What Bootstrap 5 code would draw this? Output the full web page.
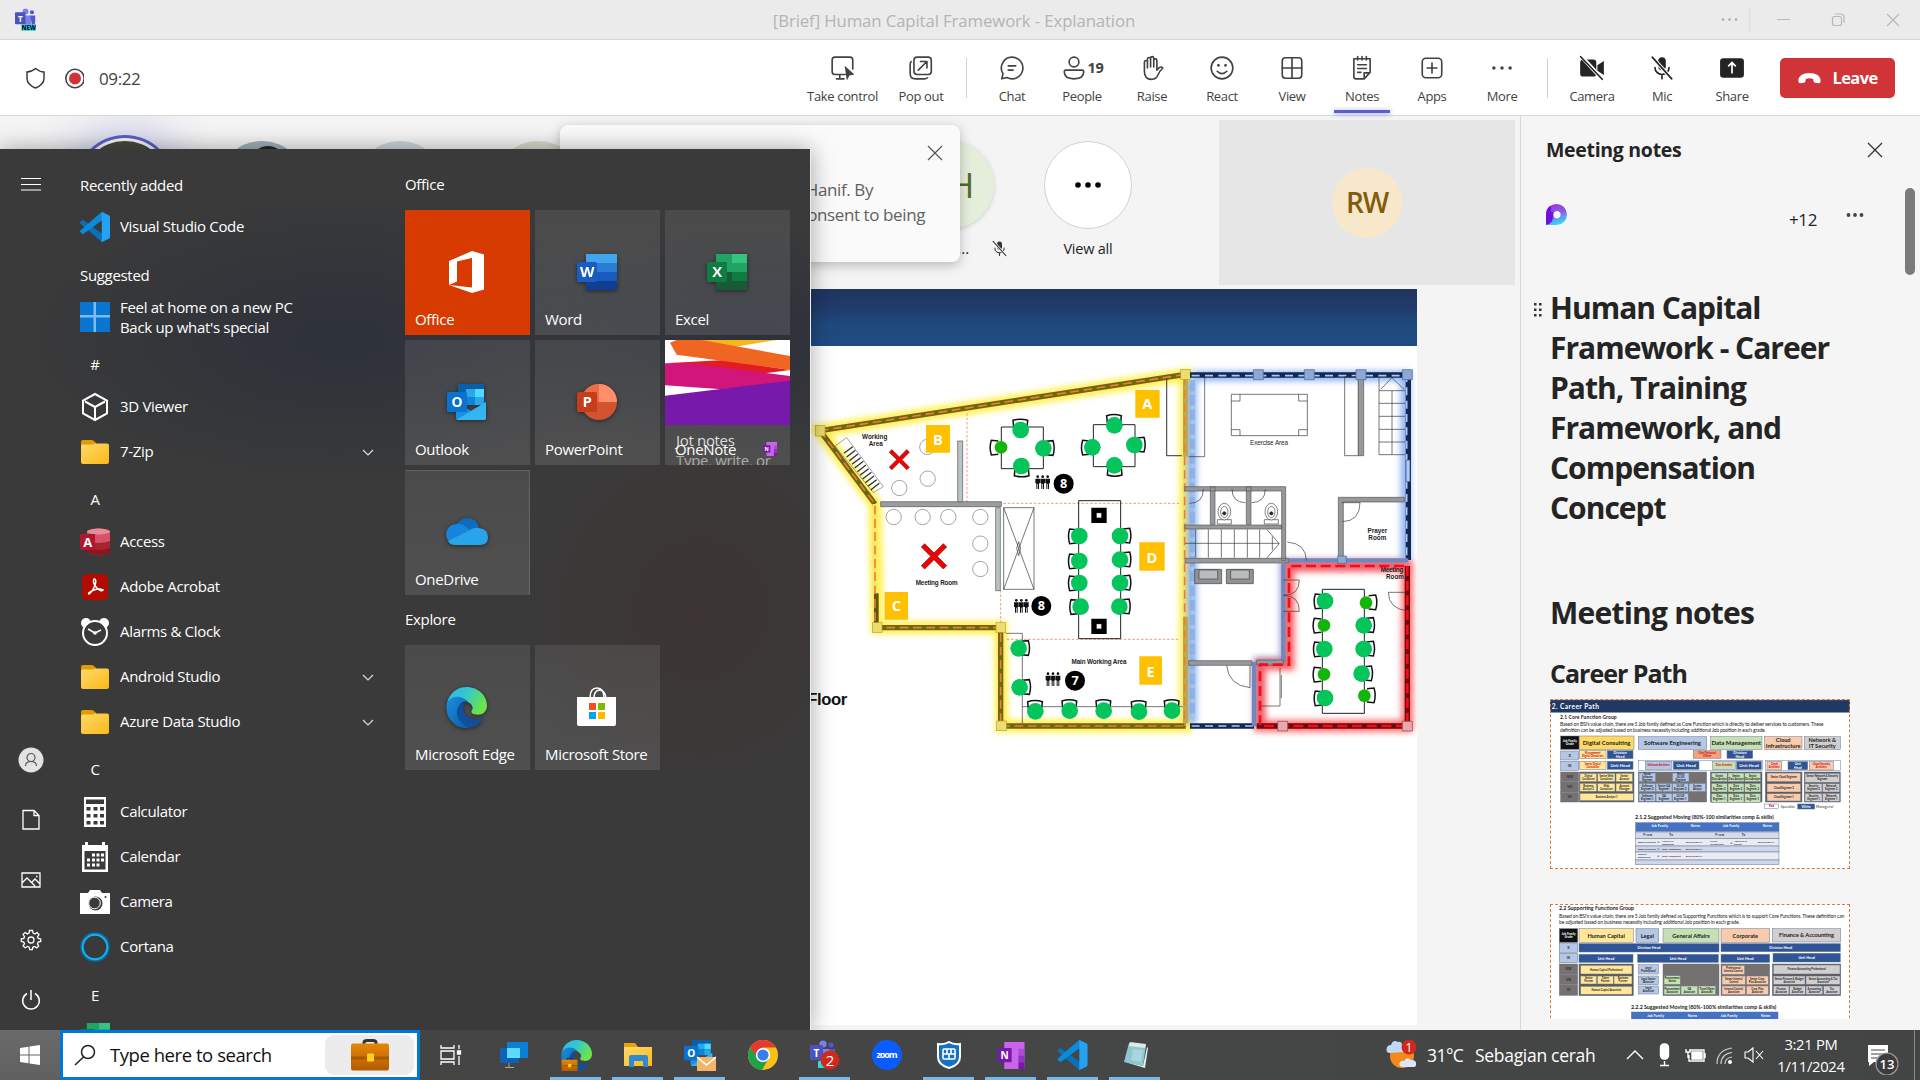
<!DOCTYPE html>
<html lang="en">
<head>
<meta charset="utf-8">
<title>Human Capital Framework - Explanation</title>
<link href="https://cdn.jsdelivr.net/npm/bootstrap@5.3.0/dist/css/bootstrap.min.css" rel="stylesheet">
<script src="https://cdn.jsdelivr.net/npm/bootstrap@5.3.0/dist/js/bootstrap.bundle.min.js"></script>
<style>
html,body{width:1920px;height:1080px;overflow:hidden}
body{font-family:"Open Sans","Noto Sans",sans-serif;font-size:15px;background:#f4f4f4;color:#242424;line-height:1.3}
svg{display:block;flex:none}
.titlebar{height:40px;background:#ebebeb;border-bottom:1px solid #d6d6d6;color:#b4b4b4}
.wintitle{font-size:16.8px;letter-spacing:-.12px;width:1910px;margin:2px -1720px 0 -37px;flex:none}
.toolbar-top{height:76px;background:#fff;border-bottom:1px solid #d9d9d9;position:relative;z-index:2}
.clock{font-size:17px;letter-spacing:-.4px;color:#424242;margin:3px 0 0 15px}
.tool{width:70px;height:75px;padding-top:15px;font-size:13px;letter-spacing:-.35px;color:#424242;position:relative;white-space:nowrap}
.tool svg{margin-bottom:7px}
.tool.current::after{content:"";position:absolute;left:7px;right:7px;bottom:2px;height:3px;background:#5b5fc7;box-shadow:0 1px 5px #8d90e6}
.vline{width:1px;height:40px;background:#d1d1d1}
.ln{fill:none;stroke:currentColor;stroke-width:1.5;stroke-linecap:round;stroke-linejoin:round}
.leave{width:115px;height:40px;border-radius:5px;background:#d13438;color:#fff;font-weight:700;font-size:16.5px;letter-spacing:-.6px;margin:1px 25px 0 13px}
.strip{height:173px;position:relative;background:#f4f4f4}
.person{width:137.6px;height:173px;padding-top:25px}
.face{width:88px;height:88px;border-radius:50%}
.speaking{box-shadow:0 0 0 3px #f4f4f4,0 0 0 6px #5b5fc7,0 0 45px 16px #cccde8}
.tile-rw{width:296px;height:165px;background:#e6e6e6;right:5px;top:4px}
.rw{width:70px;height:70px;border-radius:50%;background:#f8e8cb;color:#835b0c;font-size:28px;font-weight:600;letter-spacing:-1.2px}
.toast-card{left:560px;top:9px;width:400px;height:137px;border-radius:8px;background:#fafafa;box-shadow:0 3px 12px rgba(0,0,0,.25);z-index:3;padding:20px 17px 0 16px;color:#616161;font-size:17px;letter-spacing:-.4px}
.slide-page{margin-left:100px;width:1317px;height:736px;background:#fff}
.slide-band{height:57px;background:linear-gradient(#20355f,#203c6c 35%,#1f497c 60%,#204c84)}
.notes{width:400px;border-left:1px solid #d9d9d9;background:#f5f5f5;position:relative;overflow:hidden}
.notes h1{font-size:30px;line-height:40px;font-weight:700;margin:0;letter-spacing:-1px}
.notes h1.sub{letter-spacing:-.78px}
.notes h2{font-size:25px;line-height:34px;font-weight:700;margin:0;letter-spacing:-1px}
.thumb{width:300px;height:170px;outline:1px dashed #d9793a;outline-offset:-1px}
.scrollthumb{left:384px;top:72px;width:10px;height:87px;border-radius:5px;background:#7a7a7a}
.start{left:0;top:149px;width:811px;height:881px;z-index:10;color:#fff;border-right:1px solid #eee;box-shadow:0 0 22px rgba(0,0,0,.35);
 background:radial-gradient(ellipse 330px 150px at 340px 190px,#2d313a 0,rgba(45,49,58,0) 100%),radial-gradient(ellipse 250px 120px at 750px 190px,#2d313a 0,rgba(45,49,58,0) 100%),radial-gradient(ellipse 190px 200px at 700px 460px,#3c3533,rgba(60,53,51,0)),#3a3a3a}
.rail{width:62px}.rail>div{height:60px}
.apps{width:343px;padding:10px 0 0 18px;letter-spacing:-.32px;font-size:15px;overflow:hidden}
.app-row{height:45px;flex:none;white-space:nowrap;padding-top:1px}
.app-row>svg:first-child{margin-right:10px}
.app-head{height:45px;flex:none;padding-top:16px;line-height:20px}
.letter{width:30px;text-align:center;padding-top:15px}
.tiles{letter-spacing:-.32px}
.tilegrid{display:grid;grid-template-columns:repeat(3,125px);gap:5px}
.app-tile{height:125px;background:linear-gradient(rgba(255,255,255,.085),rgba(255,255,255,.11));position:relative;display:flex;flex-direction:column;overflow:hidden}
.app-tile .art{height:99px;padding:25px 2px 0 0;display:flex;align-items:center;justify-content:center}
.app-tile .cap{padding-left:10px;line-height:20px;white-space:nowrap}
.shade{filter:drop-shadow(0 1px 2px rgba(0,0,0,.5))}
.taskbar{height:50px;background:linear-gradient(90deg,#444342,#454646 60%,#434444);color:#fff;z-index:11;position:relative}
.winbtn{width:60px;background:linear-gradient(#6a6a6a,#606060)}
.search{width:360px;border:3px solid #0078d7;background:#fff;color:#111;font-size:18.5px;letter-spacing:-.45px}
.pill{width:89px;height:40px;border-radius:9px;background:#ececec}
.tb{width:62.1px;height:50px;position:relative}
.tb.open::after{content:"";position:absolute;left:5px;right:6px;bottom:0;height:3px;background:#76b9ed}
.tray{font-size:14px}
</style>
</head>
<body class="d-flex flex-column position-relative">

<svg width="0" height="0" class="position-absolute">
<defs>
 <linearGradient id="gf" x2="1" y2="1"><stop stop-color="#ffd96a"/><stop offset="1" stop-color="#fbb917"/></linearGradient>
 <linearGradient id="ge" x1="0" x2="1" y2=".4"><stop stop-color="#2fb7f0"/><stop offset=".5" stop-color="#32c8cf"/><stop offset="1" stop-color="#6be34b"/></linearGradient>
 <linearGradient id="gb" x2="1" y2="1"><stop stop-color="#1a8fe0"/><stop offset="1" stop-color="#0c59a4"/></linearGradient>
 <linearGradient id="gc" x2="0" y2="1"><stop stop-color="#e6860a"/><stop offset="1" stop-color="#b35c00"/></linearGradient>
 <linearGradient id="gl" x2=".3" y2="1"><stop stop-color="#9c2fd3"/><stop offset=".55" stop-color="#8b5be8"/><stop offset="1" stop-color="#35d5f2"/></linearGradient>
 <symbol id="vscode" viewBox="0 0 30 30"><path d="M0 10.200l2.200-2q.7-.5 1.400 0L22.500 22v7.500q-1 .3-2-.6L.3 11.500q-.6-.6-.3-1.300z" fill="#0a70b8"/><path d="M0 19.800l2.200 2q.7.500 1.400 0L22.500 8V.5q-1-.3-2 .6L.3 18.500q-.6.600-.3 1.300z" fill="#0a8bdc"/><path d="M21 .4q.7-.6 1.600-.2l6.200 3q1.200.6 1.200 1.800v20q0 1.200-1.200 1.800l-6.200 3q-.9.4-1.600-.2.800.3.800-1V1.400q0-1.300-.8-1z" fill="#25a3f3"/></symbol>
 <symbol id="folder" viewBox="0 0 28 24"><path d="M0 2q0-2 2-2h8q2 0 3 1l2 2v5H0z" fill="#e19b04"/><path d="M0 6.500q0-2 2-2h9q2 0 3-1h12q2 0 2 2V22q0 2-2 2H2q-2 0-2-2z" fill="url(#gf)"/></symbol>
 <symbol id="word" viewBox="0 0 40 36"><rect x="9" width="31" height="36" rx="1.500" fill="#2b7cd3"/><path d="M9 0h31v9H9z" fill="#41a5ee"/><path d="M9 18h31v9H9z" fill="#185abd"/><path d="M9 27h31v9H9z" fill="#103f91"/><rect y="8" width="20" height="20" rx="1.500" fill="#1b5dbf"/><text x="10" y="23.200" font-size="15" font-weight="700" fill="#fff" text-anchor="middle">W</text></symbol>
 <symbol id="excel" viewBox="0 0 40 36"><rect x="9" width="31" height="36" rx="1.500" fill="#185c37"/><path d="M9 0h16v9H9zM9 9h16v9H9z" fill="#21a366"/><path d="M25 0h15v9H25z" fill="#33c481"/><path d="M25 9h15v9H25z" fill="#21a366"/><path d="M25 18h15v9H25z" fill="#107c41"/><rect y="8" width="20" height="20" rx="1.500" fill="#107c41"/><text x="10" y="23.200" font-size="15" font-weight="700" fill="#fff" text-anchor="middle">X</text></symbol>
 <symbol id="outlook" viewBox="0 0 40 36"><path d="M11 0h26v20H11z" fill="#0a5ea8"/><path d="M19 5h9v8h-9z" fill="#28a8ea"/><path d="M28 5h9v8h-9z" fill="#50d9ff"/><path d="M19 13h9v8h-9z" fill="#0f84d4"/><path d="M28 13h9v8h-9z" fill="#28a8ea"/><path d="M9 18l15 9 15-9v16q0 2-2 2H11q-2 0-2-2z" fill="#1b8fe0"/><path d="M9 36l30-18v16q0 2-2 2z" fill="#35b4f2"/><rect y="8" width="20" height="20" rx="1.500" fill="#0a72cf"/><text x="10" y="23" font-size="14" font-weight="700" fill="#fff" text-anchor="middle">O</text></symbol>
 <symbol id="onenote" viewBox="0 0 40 40"><path d="M10 0h30v40H10z" fill="#ca64ea"/><path d="M31 10h9v10h-9z" fill="#ae4bd5"/><path d="M31 20h9v10h-9z" fill="#9332bf"/><path d="M31 30h9v10h-9z" fill="#7719aa"/><rect y="9" width="21" height="21" rx="1" fill="#7719aa"/><text x="10.500" y="25" font-size="15" font-weight="700" fill="#fff" text-anchor="middle">N</text></symbol>
 <symbol id="edge" viewBox="0 0 40 40"><path d="M1 16C3 6 11 0 20 0c12 0 20 9 20 18 0 6-4 9-9 9-4 0-7-1-6-4 2-2 1-6-3-8C15 9 5 10 1 16z" fill="url(#ge)"/><path d="M1 15C6 8 15 8 21 14q-6-1-9 6c-3 8 3 17 12 19.500Q12 42 5 33 -1 26 1 15z" fill="url(#gb)"/><path d="M21 15q-5 0-4 7c1 8 11 12 20 8q-5 8-12 9.500C15 38 9 30 11 22q3-8 10-7z" fill="#114e9c"/></symbol>
 <symbol id="case" viewBox="0 0 38 31"><path d="M13 5V3q0-2 3-2h6q3 0 3 2v2" fill="none" stroke="#333" stroke-width="3"/><rect y="4" width="38" height="27" rx="2" fill="url(#gc)"/><path d="M0 17h38v3H0z" fill="#8a4700" opacity=".55"/><rect x="16" y="14" width="7" height="8" rx="1" fill="#ffd21c"/></symbol>
 <symbol id="teams" viewBox="0 0 26 28"><circle cx="13" cy="4" r="3.600" fill="#7b83eb"/><circle cx="21" cy="5" r="2.600" fill="#5059c9"/><path d="M11 9h9v10q0 4-5 4t-5-4z" fill="#7b83eb"/><path d="M19 9h6v8q0 4-4 4z" fill="#5059c9"/><rect y="5" width="13" height="15" rx="1" fill="#4b53bc"/><text x="6.500" y="16.500" font-size="10" font-weight="700" fill="#fff" text-anchor="middle">T</text></symbol>
 <symbol id="micoff" viewBox="0 0 24 24"><rect x="8.500" y="2" width="7" height="12" rx="3.500" fill="currentColor"/><path d="M5.500 11.500a6.500 6.500 0 0 0 13 0M12 18v4" class="ln"/><path d="M3 2l18 20" stroke="#fff" stroke-width="3.400"/><path d="M3 2l18 20" class="ln"/></symbol>
</defs>
</svg>

<header class="titlebar d-flex align-items-center">
 <svg style="margin-left:15px" width="21" height="23" viewBox="0 0 26 28"><use href="#teams"/><rect x="8" y="20" width="18" height="8" fill="#2adbd8"/><text x="17" y="27" font-size="7.500" font-weight="800" text-anchor="middle" fill="#113">NEW</text></svg>
 <div class="wintitle text-center">[Brief] Human Capital Framework - Explanation</div>
 <svg class="ms-auto" width="205" height="24" viewBox="1715 8 205 24" fill="none" stroke="#b9b9b9" stroke-width="1.200"><g fill="#aaa" stroke="none"><circle cx="1723" cy="19.500" r="1.300"/><circle cx="1729.500" cy="19.500" r="1.300"/><circle cx="1736" cy="19.500" r="1.300"/></g><path d="M1749.500 8v24" stroke="#ddd"/><path d="M1777 19.500h13M1887 14l12 12M1899 14l-12 12"/><rect x="1832.500" y="16.500" width="9" height="9" rx="2"/><path d="M1835 14h6q3 0 3 3v6"/></svg>
</header>

<div class="toolbar-top d-flex align-items-center">
 <svg width="62" height="30" viewBox="22 62 62 30" style="margin-left:22px"><path d="M35.500 67.500q4.500 3.500 8.500 3.500V77.500q0 6-8.500 9.500Q27 83.500 27 77.500v-6.500q4.500 0 8.500-3.500z" fill="none" stroke="#333" stroke-width="1.400"/><circle cx="75" cy="77.500" r="9.200" fill="#fff" stroke="#444" stroke-width="1.600"/><circle cx="75" cy="77.500" r="6" fill="#d13438"/></svg>
 <span class="clock">09:22</span>
 <div class="ms-auto d-flex align-items-center">
  <div class="tool d-flex flex-column align-items-center" style="width:89px"><svg width="26" height="26" viewBox="0 0 24 24"><path d="M14 18H4.500Q2 18 2 15.500v-11Q2 2 4.500 2h14Q21 2 21 4.500V13M9 18v4M6 22h7" class="ln"/><path d="M13.500 10l9 8-4.500 1-2.500 4.500z" fill="currentColor"/></svg>Take control</div>
  <div class="tool d-flex flex-column align-items-center" style="width:68px"><svg width="26" height="26" viewBox="0 0 24 24"><rect x="5.500" y="2" width="16" height="16" rx="3" class="ln"/><path d="M3 6q-1 1-1 3v8q0 5 5 5h8q2 0 3-1M9.500 14L17 6.500M11.500 6H17.500v6" class="ln"/></svg>Pop out</div>
  <div class="d-flex justify-content-center" style="width:22px"><div class="vline"></div></div>
  <div class="tool d-flex flex-column align-items-center"><svg width="26" height="26" viewBox="0 0 24 24"><path d="M12 2a10 10 0 1 1-4.700 18.800L2.500 22l1.200-4.700A10 10 0 0 1 12 2zM8.500 10h7M8.500 14h4.500" class="ln"/></svg>Chat</div>
  <div class="tool d-flex flex-column align-items-center"><div class="d-flex"><svg width="26" height="26" viewBox="0 0 24 24"><circle cx="12" cy="6.500" r="4.500" class="ln"/><path d="M4.500 14h15q1.500 0 1.500 1.500 0 6.500-9 6.500t-9-6.500Q3 14 4.500 14z" class="ln"/></svg><b style="font-size:14.500px;line-height:25px;margin-left:1px;font-weight:700">19</b></div>People</div>
  <div class="tool d-flex flex-column align-items-center"><svg width="26" height="26" viewBox="0 0 24 24"><path d="M5 13V6.500a1.400 1.400 0 0 1 2.800 0V12M7.800 11V3.700a1.400 1.400 0 0 1 2.900 0V11M10.700 11V3a1.400 1.400 0 0 1 2.900 0v8M13.600 11V5a1.400 1.400 0 0 1 2.900 0v9l2-2.200q2-1.500 3.500.2-3.500 3.300-4.500 6.500-1.500 4-6 4Q5 22.500 5 15v-3" class="ln"/></svg>Raise</div>
  <div class="tool d-flex flex-column align-items-center"><svg width="26" height="26" viewBox="0 0 24 24"><circle cx="12" cy="12" r="10" class="ln"/><path d="M7.500 15q4.500 4.500 9 0" class="ln"/><circle cx="8.700" cy="9.500" r="1.300" fill="currentColor"/><circle cx="15.300" cy="9.500" r="1.300" fill="currentColor"/></svg>React</div>
  <div class="tool d-flex flex-column align-items-center"><svg width="26" height="26" viewBox="0 0 24 24"><rect x="3" y="2.500" width="18" height="19" rx="3" class="ln"/><path d="M12 2.500v19M3 12h18" class="ln"/></svg>View</div>
  <div class="tool current d-flex flex-column align-items-center"><svg width="26" height="26" viewBox="0 0 24 24"><path d="M4.500 3.500h15V16L14 22H6.500q-2 0-2-2zM19 16.500h-5V22M8 1.500v3M12 1.500v3M16 1.500v3M8 9h8M8 12.500h8M8 16h3" class="ln"/></svg>Notes</div>
  <div class="tool d-flex flex-column align-items-center"><svg width="26" height="26" viewBox="0 0 24 24"><rect x="3" y="3" width="18" height="18" rx="3.500" class="ln"/><path d="M12 7.500v9M7.500 12h9" class="ln"/></svg>Apps</div>
  <div class="tool d-flex flex-column align-items-center"><svg width="26" height="26" viewBox="0 0 24 24" fill="currentColor"><circle cx="4.500" cy="12" r="1.600"/><circle cx="12" cy="12" r="1.600"/><circle cx="19.500" cy="12" r="1.600"/></svg>More</div>
  <div class="d-flex justify-content-center" style="width:20px"><div class="vline"></div></div>
  <div class="tool d-flex flex-column align-items-center"><svg width="28" height="26" viewBox="0 0 26 24" color="#242424"><rect x="2" y="4" width="15" height="16" rx="3" fill="currentColor"/><path d="M18 9.500l6-4v13l-6-4z" fill="currentColor"/><path d="M3 1l20 22" stroke="#fff" stroke-width="3.600"/><path d="M2.500 1.500l20 21" class="ln"/></svg>Camera</div>
  <div class="tool d-flex flex-column align-items-center"><svg width="26" height="26" color="#242424"><use href="#micoff"/></svg>Mic</div>
  <div class="tool d-flex flex-column align-items-center"><svg width="26" height="26" viewBox="0 0 24 24"><rect x="1" y="3" width="22" height="18" rx="3" fill="#242424"/><path d="M12 17V7.500M8.500 10.500L12 7l3.500 3.500" fill="none" stroke="#fff" stroke-width="1.600"/></svg>Share</div>
  <div class="leave d-flex align-items-center justify-content-center" style="gap:10px"><svg width="25" height="13" viewBox="0 0 26 14"><path d="M13 1C6 1 1 4 1 9.500q0 3 2.500 2.700l3.500-.6q1.500-.4 1.700-2l.3-2q4-1.500 8 0l.3 2q.2 1.600 1.700 2l3.500.6q2.500.3 2.500-2.700C25 4 20 1 13 1z" fill="#fff"/></svg>Leave</div>
 </div>
</div>

<main class="d-flex" style="height:914px">
 <section style="width:1520px">
  <div class="strip d-flex" style="padding-left:56px">
   <div class="person d-flex flex-column align-items-center"><div class="face speaking" style="background:#454840"></div></div>
   <div class="person d-flex flex-column align-items-center"><svg class="face" width="88" height="88"><rect width="88" height="88" fill="#9db0b7"/><circle cx="50" cy="22" r="17" fill="#22272a"/></svg></div>
   <div class="person d-flex flex-column align-items-center"><div class="face" style="background:#c9d3da"></div></div>
   <div class="person d-flex flex-column align-items-center"><div class="face" style="background:#d3dbcb"></div></div>
   <div class="person"></div><div class="person"></div>
   <div class="person d-flex flex-column align-items-center"><div class="face d-flex align-items-center justify-content-center" style="background:#e5eddb;box-shadow:0 1px 4px #ccc;color:#4c6b2c;font-size:35px;font-weight:500">AH</div><div class="d-flex align-items-center w-100 justify-content-end" style="padding:10px 11px 0 0;gap:22px">...<svg width="17" height="17" color="#333"><use href="#micoff"/></svg></div></div>
   <div class="person d-flex flex-column align-items-center"><div class="face d-flex align-items-center justify-content-center bg-white" style="border:1px solid #d1d1d1"><svg width="28" height="6"><circle cx="4" cy="3" r="2.800"/><circle cx="14" cy="3" r="2.800"/><circle cx="24" cy="3" r="2.800"/></svg></div><span style="font-size:14.500px;letter-spacing:-.22px;margin-top:11px">View all</span></div>
   <div class="toast-card position-absolute"><div class="d-flex justify-content-between"><b style="font-weight:600;color:#242424">Recording has started</b><svg width="16" height="16" viewBox="0 0 16 16" stroke="#555" stroke-width="1.200"><path d="M1 1l14 14M15 1L1 15"/></svg></div>
    <div style="padding:10px 70px 0 0;line-height:25px;text-align:right;white-space:nowrap">Hanif. By</div><div style="padding-right:18px;line-height:25px;text-align:right">you consent to being</div></div>
   <div class="tile-rw position-absolute d-flex align-items-center justify-content-center"><div class="rw d-flex align-items-center justify-content-center">RW</div></div>
  </div>
  <div class="slide-page">
   <div class="slide-band"></div>
   <div class="d-flex justify-content-end">
   <svg id="plan" width="617" height="679" viewBox="0 -42 1851 2037" font-family="Liberation Sans, sans-serif">
    <defs>
     <filter id="soft" x="-10%" y="-10%" width="120%" height="120%"><feGaussianBlur stdDeviation="9"/></filter>
     <g id="chair"><path d="M-8-19L-29-21Q-36 1-29 23L-8 21" fill="none" stroke="#111" stroke-width="4.500"/></g>
     <g id="crowd" fill="#111"><circle cx="-15" cy="-17" r="4"/><circle cy="-17" r="4"/><circle cx="15" cy="-17" r="4"/><path d="M-22-11h14v14h-3v17h-3V5h-2v15h-3V3h-3zM-7-11H7V3H4v17H1V5h-2v15h-3V3h-3zM8-11h14V3h-3v17h-3V5h-2v15h-3V3H8z"/></g>
     <g id="cross"><path d="M-38-28l10-10L0-10l28-28 10 10L10 0l28 28-10 10L0 10l-28 28-10-10L-10 0z" fill="#f40000" stroke="#611" stroke-width="2"/></g>
    </defs>
    <path d="M60 212L1157 45V1098H605L602 803H232L225 432z" fill="none" stroke="#fff04a" stroke-width="38" filter="url(#soft)"/>
    <path d="M1175 60V1090M1180 48H1817V600" fill="none" stroke="#8db4f5" stroke-width="30" filter="url(#soft)"/>
    <path d="M1810 612H1452V905H1375V1098" fill="none" stroke="#9cbcf5" stroke-width="26" filter="url(#soft)"/>
    <path d="M1467 618H1822V1098H1380V914H1467z" fill="none" stroke="#ff4545" stroke-width="34" filter="url(#soft)" opacity=".8"/>
    <g fill="none">
     <path d="M1157 43L60 212 225 432M232 803H602V1098H1157" stroke="#6f6710" stroke-width="16"/>
     <path d="M225 432V803" stroke="#f7e868" stroke-width="15"/><path d="M229 700V803" stroke="#5e5710" stroke-width="14"/>
     <path d="M1157 60V290M1157 770V1090" stroke="#b5ac55" stroke-width="16"/>
     <path d="M60 212L1157 43M60 212L225 432V803H602V1098H1157M1154 50V1098" stroke="#f37a3b" stroke-width="5" stroke-dasharray="26 14"/>
     <path d="M501 160V430M610 430H1140M602 690V800M620 838H1140" stroke="#f08a68" stroke-width="2.500" stroke-dasharray="8 5"/>
    </g>
    <g fill="#eedc6c" stroke="#b3a33b" stroke-width="2"><rect x="46" y="196" width="29" height="32"/><rect x="1142" y="28" width="29" height="30"/><rect x="217" y="788" width="29" height="29"/><rect x="588" y="788" width="29" height="29"/><rect x="590" y="1083" width="29" height="29"/></g>
    <g fill="#999d9f" stroke="#555" stroke-width="2"><path d="M242 425H604V440H242z"/><path d="M473 243h15V425h-15zM587 443h14V692h-14z" fill="#b9c2c4"/></g>
    <g fill="none" stroke="#333" stroke-width="2">
     <path d="M1100 55V287H1145M611 443H702V688H611zM611 443L702 688M702 443L611 688M656 545l-6 20 6 22 6-22zM617 820H667V1090M667 1040H1148"/>
     <path d="M836 422H962V836H836zM604 201H730V326H604zM880 194H1005V320H880z" stroke="#222" stroke-width="3"/>
     <path d="M105 258L140 233 250 380 220 398z" stroke="#777"/>
     <path d="M158 260l-26 20M166 271l-26 20M174 282l-26 20M182 293l-26 20M190 304l-26 20M198 315l-26 20M206 326l-26 20M214 337l-26 20M222 348l-26 20M230 359l-26 20M238 370l-26 20" stroke-width="4"/>
     <g stroke="#777"><circle cx="382" cy="261" r="23"/><circle cx="383" cy="356" r="23"/><circle cx="298" cy="384" r="23"/><circle cx="281" cy="471" r="23"/><circle cx="368" cy="471" r="23"/><circle cx="445" cy="471" r="23"/><circle cx="541" cy="471" r="23"/><circle cx="541" cy="551" r="23"/><circle cx="541" cy="627" r="23"/></g>
    </g>
    <g id="seats"></g>
    <path d="M874 443h46v46h-46zM874 776h46v46h-46z" fill="#000"/><path d="M890 459h14v14h-14zM890 792h14v14h-14z" fill="#fff" stroke="#555"/>
    <use href="#cross" transform="translate(298 299) scale(.8)"/><use href="#cross" transform="translate(402 589)"/>
    <use href="#crowd" x="728" y="367"/><use href="#crowd" x="664" y="738"/><use href="#crowd" x="759" y="958"/>
    <g font-weight="700" font-family="Open Sans, sans-serif" font-size="38" text-anchor="middle" fill="#fff"><g fill="#000"><circle cx="791" cy="371" r="30"/><circle cx="724" cy="738" r="30"/><circle cx="825" cy="962" r="30"/></g><text x="791" y="384">8</text><text x="724" y="751">8</text><text x="825" y="975">7</text>
     <path d="M1006 90h73v83h-73zM378 195h72v83h-72zM254 696h70v83h-70zM1018 547h76v85h-76zM1018 889h68v85h-68z" fill="#ffc000"/>
     <g font-size="44"><text x="1042" y="147">A</text><text x="414" y="254">B</text><text x="289" y="754">C</text><text x="1056" y="608">D</text><text x="1052" y="950">E</text></g></g>
    <g font-size="19" font-weight="700" text-anchor="middle" fill="#222"><text x="224" y="236">Working</text><text x="227" y="257">Area</text><text x="410" y="674" textLength="126">Meeting Room</text><text x="897" y="911" textLength="165">Main Working Area</text><text x="1732" y="519">Prayer</text><text x="1732" y="540">Room</text><text x="1776" y="636" textLength="68">Meeting</text><text x="1785" y="657">Room</text><text x="1407" y="254" textLength="114" font-weight="400">Exercise Area</text></g>
    <text x="22" y="1034" font-size="50" font-weight="700" textLength="120" fill="#111">Floor</text>
    <g transform="translate(1080 0)" fill="none" stroke="#333" stroke-width="2">
     <path d="M90 45H745V600M90 1098H282" stroke="#14284f" stroke-width="16"/>
     <path d="M95 47H740V600M95 1098H282M97 60V1070" stroke="#a9c8ff" stroke-width="5" stroke-dasharray="24 16"/>
     <path d="M97 60V1070" stroke="#7fa3e8" stroke-width="16" stroke-dasharray="32 12" opacity=".55"/>
     <path d="M385 601H745M370 612V905M282 905V1098" stroke="#7089bd" stroke-width="13"/>
     <path d="M738 300h12v65h-12z" fill="#a9c8ff" stroke="#456"/>
     <path d="M20 55V287H66M86 290H134V50M554 50H595V287H554zM214 103H442V227H214zM214 123h26v-20M416 103v20h26M214 209h26v18M416 227v-18h26M657 55V284H735M696 92V284M657 92H735M657 130H735M657 169H735M657 208H735M657 246H735M662 88l34-35 36 35"/>
     <path d="M75 550H357M107 508v85M145 508v85M184 508v85M223 508v85M262 508v85M299 508v85M337 530v40M320 508l38 43-38 43"/>
     <g fill="#96999c" stroke="#555"><path d="M595 50h16V287h-16zM75 380H377V602H365V393H75zM151 380h14V493H151zM259 380h14V493H259zM75 495H365v12H75zM75 595H385v14H75zM535 412H733v14H550V590H535zM86 902H275v14H86zM290 900H370v15H290z"/></g>
     <path d="M130 387Q130 430 88 430M216 387q0 40 40 41M316 387q0 40-41 41M545 428h55q0 55-52 57M382 546q57 5 57 56M200 916q5 60 70 67V916M370 660h48q0 46-48 46q48 0 48 48H370M748 697H685q0 50 60 56M300 1038h60V923M364 945v70"/>
     <g fill="#fff" stroke="#444"><path d="M172 492v-13h42v13zM313 492v-13h42v13z"/><ellipse cx="193" cy="455" rx="19" ry="25"/><ellipse cx="334" cy="455" rx="19" ry="25"/><ellipse cx="193" cy="456" rx="11" ry="17"/><ellipse cx="334" cy="456" rx="11" ry="17"/></g>
     <g fill="#222"><circle cx="193" cy="460" r="5"/><circle cx="334" cy="460" r="5"/></g>
     <g fill="#8f9293" stroke="#444"><path d="M104 628h81v43h-81zM199 628h81v43h-81z"/><path d="M117 630h56v27h-56zM212 630h56v27h-56z" fill="#b9bbbc"/></g>
     <path d="M487 688H613V1060H487z" stroke="#222" stroke-width="3"/>
     <path d="M742 618V1098H290" stroke="#6c0a12" stroke-width="16"/>
     <path d="M742 618V1098H300V914H387V618z" stroke="#fa0a18" stroke-width="8" stroke-dasharray="30 14"/>
     <g fill="#8ea8d4" stroke="#4d6795"><path d="M280 29h30v30h-30zM433 29h30v30h-30zM588 29h30v30h-30zM727 29h30v30h-30zM533 588h26v22h-26z"/></g>
     <g fill="#e8a9ae" stroke="#844"><path d="M353 1084h30v29h-30zM727 1084h30v29h-30z"/></g>
    </g>
    <g id="seats2"></g>
   </svg></div>
  </div>
 </section>

 <aside class="notes">
  <div class="d-flex justify-content-between align-items-center" style="padding:22px 37px 0 25px;height:46px"><span style="font-size:19.500px;font-weight:700;letter-spacing:-.3px">Meeting notes</span><svg width="16" height="16" stroke="#333" stroke-width="1.300"><path d="M1 1l14 14M15 1L1 15"/></svg></div>
  <div class="d-flex align-items-start" style="padding:42px 56px 0 25px;height:125px"><svg width="22" height="22" viewBox="0 0 22 22"><path d="M0 21V10.500A10.500 10.500 0 1 1 10.500 21zM11 7a3.700 3.700 0 1 0 .01 0z" fill="url(#gl)" fill-rule="evenodd"/><path d="M0 21V10.500Q0 4 5 1.500V8q3-1 2 4 0 8-7 9z" fill="#7010e0"/></svg><span class="ms-auto" style="font-size:17px;letter-spacing:-.4px;margin-top:5px;margin-right:29px">+12</span><svg width="18" height="6" style="margin-top:8px" fill="#444"><circle cx="2.500" cy="3" r="1.900"/><circle cx="9" cy="3" r="1.900"/><circle cx="15.500" cy="3" r="1.900"/></svg></div>
  <div class="d-flex"><svg width="10" height="16" style="margin:16px 7px 0 12px" fill="#333"><path d="M1 0h2.500v2.500H1zM6 0h2.500v2.500H6zM1 5.500h2.500V8H1zM6 5.500h2.500V8H6zM1 11h2.500v2.500H1zM6 11h2.500v2.500H6z"/></svg><h1 style="padding-top:1px">Human Capital<br>Framework - Career<br>Path, Training<br>Framework, and<br>Compensation<br>Concept</h1></div>
  <h1 class="sub" style="margin:65px 0 0 29px">Meeting notes</h1>
  <h2 style="margin:23px 0 9px 29px">Career Path</h2>
  <svg id="chart1" class="thumb" style="margin-left:29px" viewBox="60 27 900 510"></svg>
  <div style="margin:35px 0 0 29px;height:115px;overflow:hidden"><svg id="chart2" class="thumb" viewBox="60 642 900 510"></svg></div>
  <div class="scrollthumb position-absolute"></div>
 </aside>
</main>

<nav class="start position-absolute d-flex">
 <div class="rail d-flex flex-column align-items-center">
  <svg width="20" height="14" style="margin-top:28px" stroke="#fff" stroke-width="1.200"><path d="M0 1.500h20M0 7.500h20M0 13h20"/></svg>
  <div class="mt-auto d-flex align-items-center"><svg width="26" height="26"><circle cx="13" cy="13" r="12.500" fill="#e3e3e3"/><circle cx="13" cy="10.500" r="4" fill="none" stroke="#555" stroke-width="1.200"/><path d="M7.500 19q0-4.500 5.500-4.500t5.500 4.500" fill="none" stroke="#555" stroke-width="1.200"/></svg></div>
  <div class="d-flex align-items-center"><svg width="18" height="22" fill="none" stroke="#fff" stroke-width="1.300"><path d="M1 1.500h11l5 5v13.500H1zM12 1.500v5h5"/></svg></div>
  <div class="d-flex align-items-center"><svg width="20" height="16" fill="none" stroke="#fff" stroke-width="1.300"><path d="M1 1h18v14H1zM1 11l5-5 8 8M11 10l3-3 5 5M15 4.500h1.500"/></svg></div>
  <div class="d-flex align-items-center"><svg width="22" height="22" viewBox="-11 -11 22 22" fill="none" stroke="#fff" stroke-width="1.300"><circle r="3"/><path d="M-1.500-9.500h3l.6 2.600 1.800.8L6.200-7.500 8-5.500 6.500-3.200l.8 1.700 2.400.5v2.500l-2.500.6-.8 1.800L7.700 6 5.800 7.900 3.600 6.500l-1.800.8-.5 2.400h-2.500l-.6-2.500L-3.600 6.500l-2.300 1.300L-7.900 6l1.400-2.300-.8-1.700-2.400-.6v-2.500l2.500-.5.7-1.700-1.400-2.300 2-1.900 2.200 1.400 1.700-.8z"/></svg></div>
  <div class="d-flex align-items-center"><svg width="20" height="22" fill="none" stroke="#fff" stroke-width="1.500"><path d="M6 4.500a8.300 8.300 0 1 0 8 0M10 1v10"/></svg></div>
 </div>
 <div class="apps d-flex flex-column">
  <div class="app-head">Recently added</div>
  <div class="app-row d-flex align-items-center"><svg width="30" height="30"><use href="#vscode"/></svg>Visual Studio Code</div>
  <div class="app-head">Suggested</div>
  <div class="app-row d-flex align-items-center" style="line-height:20px;padding-top:0"><svg width="30" height="30"><path d="M0 0h30v30H0z" fill="#0a74d1"/><path d="M13.500 0h2.500v30h-2.500zM0 13h30v2.500H0z" fill="#79bdf2"/></svg><span>Feel at home on a new PC<br>Back up what's special</span></div>
  <div class="app-head letter">#</div>
  <div class="app-row d-flex align-items-center"><svg width="30" height="30" fill="none" stroke="#fff" stroke-width="2"><path d="M15 2l12 6.500v13L15 28 3 21.500v-13zM5 9.500l10 5.500 10-5.500M15 15v12"/></svg>3D Viewer</div>
  <div class="app-row d-flex align-items-center"><svg width="30" height="24"><use href="#folder"/></svg>7-Zip<svg class="ms-auto" width="12" height="7" style="margin-right:31px" fill="none" stroke="#ddd" stroke-width="1.200"><path d="M1 1l5 5 5-5"/></svg></div>
  <div class="app-head letter">A</div>
  <div class="app-row d-flex align-items-center"><svg width="30" height="28"><path d="M7 3q11-5 23 0v22q-11 5-23 0z" fill="#a4262c"/><path d="M7 3q11-5 23 0v10q-11 4-23 0z" fill="#d6536b"/><ellipse cx="18.500" cy="3.500" rx="11.500" ry="3" fill="#e88b9b"/><path d="M7 20q11 4 23 0v5q-11 4-23 0z" fill="#8a1523"/><path d="M0 6h15v16H0z" fill="#b0172e"/><text x="7.500" y="18.500" font-size="13" font-weight="700" fill="#fff" text-anchor="middle">A</text></svg>Access</div>
  <div class="app-row d-flex align-items-center"><svg width="30" height="28"><rect x="2" y="1" width="26" height="26" rx="5" fill="#b30b00"/><path d="M14 6q3 0 1 6-2 6-6 9-2-1 5-4 5-2 9 0-2 2-6-2-5-5-3-9z" fill="none" stroke="#fff" stroke-width="1.500"/></svg>Adobe Acrobat</div>
  <div class="app-row d-flex align-items-center"><svg width="30" height="30"><circle cx="6" cy="6" r="5" fill="#fff"/><circle cx="24" cy="6" r="5" fill="#fff"/><circle cx="15" cy="16" r="12" fill="#3a3a3a" stroke="#fff" stroke-width="2"/><path d="M8 12l7 4 6-3" fill="none" stroke="#fff" stroke-width="1.600"/><circle cx="15" cy="16" r="1.800" fill="#fff"/></svg>Alarms &amp; Clock</div>
  <div class="app-row d-flex align-items-center"><svg width="30" height="24"><use href="#folder"/></svg>Android Studio<svg class="ms-auto" width="12" height="7" style="margin-right:31px" fill="none" stroke="#ddd" stroke-width="1.200"><path d="M1 1l5 5 5-5"/></svg></div>
  <div class="app-row d-flex align-items-center"><svg width="30" height="24"><use href="#folder"/></svg>Azure Data Studio<svg class="ms-auto" width="12" height="7" style="margin-right:31px" fill="none" stroke="#ddd" stroke-width="1.200"><path d="M1 1l5 5 5-5"/></svg></div>
  <div class="app-head letter">C</div>
  <div class="app-row d-flex align-items-center"><svg width="30" height="30"><path d="M4 0h22v30H4z" fill="#fff"/><path d="M6 2.500h18v4.500H6zM6.500 10h4v3.500h-4zM13.500 10h4v3.500h-4zM20 10h4v3.500h-4zM6.500 17h4v3.500h-4zM13.500 17h4v3.500h-4zM20 17h4v3.500h-4zM6.500 24h4v3.500h-4zM13.500 24h4v3.500h-4zM20 24h4v3.500h-4z" fill="#3a3a3a"/></svg>Calculator</div>
  <div class="app-row d-flex align-items-center"><svg width="30" height="30"><path d="M2 3h3V0h3v3h14V0h3v3h3v27H2z" fill="#fff"/><path d="M4.500 9h21v18.500h-21z" fill="#3a3a3a"/><path d="M12 11.500h3v3h-3zM16.500 11.500h3v3h-3zM21 11.500h3v3h-3zM7 16.500h3v3H7zM12 16.500h3v3h-3zM16.500 16.500h3v3h-3zM21 16.500h3v3h-3zM7 21.500h3v3H7zM12 21.500h3v3h-3zM16.500 21.500h3v3h-3z" fill="#fff"/></svg>Calendar</div>
  <div class="app-row d-flex align-items-center"><svg width="30" height="24"><path d="M0 3h8l2-3h10l2 3h8v21H0z" fill="#fff"/><circle cx="15.500" cy="13.500" r="7" fill="#3a3a3a"/><circle cx="14.500" cy="13" r="5.800" fill="#3a3a3a" stroke="#fff"/><circle cx="25.500" cy="7" r="1" fill="#3a3a3a"/></svg>Camera</div>
  <div class="app-row d-flex align-items-center"><svg width="30" height="30"><circle cx="15" cy="15" r="13" fill="none" stroke="#0c6d9e" stroke-width="3.500"/><circle cx="15" cy="15" r="12.300" fill="none" stroke="#12b2f5" stroke-width="1.900"/></svg>Cortana</div>
  <div class="app-head letter" style="padding-top:16px">E</div>
  <div style="margin-top:9px;flex:none"><svg width="30" height="27"><use href="#excel"/></svg></div>
 </div>
 <div class="tiles">
  <div style="height:61px;padding-top:25px;line-height:20px">Office</div>
  <div class="tilegrid">
   <div class="app-tile" style="background:#d83b01"><div class="art"><svg width="36" height="42" viewBox="0 0 36 42"><path d="M0 10L23 0l12 3.500v35L23 42 0 34l23 2.500V7L8 10.500v20L0 34z" fill="#fff"/></svg></div><div class="cap">Office</div></div>
   <div class="app-tile"><div class="art"><svg class="shade" width="40" height="36"><use href="#word"/></svg></div><div class="cap">Word</div></div>
   <div class="app-tile"><div class="art"><svg class="shade" width="40" height="36"><use href="#excel"/></svg></div><div class="cap">Excel</div></div>
   <div class="app-tile"><div class="art"><svg class="shade" width="40" height="36"><use href="#outlook"/></svg></div><div class="cap">Outlook</div></div>
   <div class="app-tile"><div class="art"><svg class="shade" width="40" height="36" viewBox="0 0 40 36"><circle cx="22" cy="18" r="18" fill="#d35230"/><path d="M22 18V0A18 18 0 0 1 40 18z" fill="#ff8f6b"/><path d="M22 18V0A18 18 0 0 0 4 18z" fill="#ed6c47"/><rect y="8" width="20" height="20" rx="1.500" fill="#c43e1c"/><text x="10" y="23.200" font-size="15" font-weight="700" fill="#fff" text-anchor="middle">P</text></svg></div><div class="cap">PowerPoint</div></div>
   <div class="app-tile"><svg width="125" height="85" viewBox="0 0 375 255"><path d="M0 0h375v255H0z" fill="#fff"/><path d="M100 0h235L210 20z" fill="#f5b71a"/><path d="M0 70L180 60 375 90 300 100z" fill="#e31b23"/><path d="M35 0h75L375 48v42L35 44 15 8z" fill="#f16522"/><path d="M0 70L90 72 375 108v20L170 148 0 136z" fill="#d0167b"/><path d="M0 167L375 122v133H0z" fill="#7719aa"/></svg>
    <div class="position-absolute" style="left:11px;top:90px;line-height:20px;color:#ddd;white-space:nowrap">Jot notes<br><span style="color:#aaa">Type, write, or</span></div><div class="cap position-absolute" style="top:99px">OneNote</div><svg class="position-absolute" style="left:97px;top:102px" width="16" height="14"><use href="#onenote"/></svg></div>
   <div class="app-tile" style="box-shadow:inset -1px 1px 1px rgba(255,255,255,.14)"><div class="art"><svg class="shade" width="42" height="28" viewBox="0 0 42 28"><path d="M10 8Q14 0 21 0q9 0 12 9l-10 8z" fill="#0f6cbd"/><path d="M10 6q6-1 10 3l10 7-25 9Q0 22 0 16 1 7 10 6z" fill="#1683dc"/><path d="M2 23L24 12q4-3 9-2 9 1 9 9t-8 8H9q-5 0-7-4z" fill="#28a4ea"/></svg></div><div class="cap">OneDrive</div></div>
  </div>
  <div style="height:50px;padding-top:14px;line-height:20px">Explore</div>
  <div class="tilegrid">
   <div class="app-tile"><div class="art"><svg class="shade" width="41" height="41"><use href="#edge"/></svg></div><div class="cap">Microsoft Edge</div></div>
   <div class="app-tile"><div class="art"><svg width="40" height="40"><path d="M13 11q0-10 7-10t7 10M17 11q0-7 5-8 6 0 7 8" fill="none" stroke="#fff" stroke-width="1.500"/><path d="M0 10h39v27q0 2-2 2H2q-2 0-2-2z" fill="#fff"/><path d="M12 16h7v7h-7z" fill="#f25022"/><path d="M21 16h7v7h-7z" fill="#7fba00"/><path d="M12 25h7v7h-7z" fill="#00a4ef"/><path d="M21 25h7v7h-7z" fill="#ffb900"/></svg></div><div class="cap">Microsoft Store</div></div>
  </div>
 </div>
</nav>

<footer class="taskbar d-flex">
 <div class="winbtn d-flex align-items-center justify-content-center"><svg width="20" height="20" fill="#fff"><path d="M0 3l8.500-1.200v7.700H0zM9.500 1.600L20 0v9.500H9.500zM0 10.500h8.500v7.700L0 17zM9.500 10.500H20V20L9.500 18.400z"/></svg></div>
 <div class="search d-flex align-items-center"><svg width="22" height="22" style="margin:0 14px 0 11px" fill="none" stroke="#222" stroke-width="1.500"><circle cx="14" cy="8" r="6.500"/><path d="M9.500 13L1 21"/></svg>Type here to search<div class="pill ms-auto d-flex align-items-center justify-content-center" style="margin-right:3px"><svg width="38" height="32"><use href="#case"/></svg></div></div>
 <div class="tb d-flex align-items-center justify-content-center"><svg width="22" height="20" fill="none" stroke="#fff" stroke-width="1.300"><path d="M1 0v3h13V0M1 20v-3h13v3M1 6h13v8H1zM19 0v4M19 11v9"/><path d="M17.500 6h3v3h-3z" fill="#fff"/></svg></div>
 <div class="tb d-flex align-items-center justify-content-center" style="margin-left:1px"><svg width="30" height="28"><path d="M8 1h21v16H8z" fill="#0b7fd6"/><path d="M1 7h19v15H1z" fill="#0c62b5"/><path d="M8 7h13v10H8z" fill="#5bdcff"/><path d="M10 22v4M6 26.500h9" stroke="#aaa"/></svg></div>
 <div class="tb open d-flex align-items-center justify-content-center"><svg width="31" height="31"><use href="#edge" width="31" height="31"/><use href="#case" x="0" y="18" width="17" height="13"/></svg></div>
 <div class="tb open d-flex align-items-center justify-content-center"><svg width="28" height="24"><path d="M0 0h11l3 4v5H0z" fill="#e8a20b"/><path d="M0 4h28v19H0z" fill="url(#gf)"/><path d="M5 24V14q0-2 2-2h15q2 0 2 2v10h-5v-6h-9v6z" fill="#2f8ad6"/></svg></div>
 <div class="tb open d-flex align-items-center justify-content-center"><svg width="32" height="31"><use href="#outlook" width="29" height="26"/><path d="M13 17h19v14H13z" fill="#f0b46b"/><path d="M13 17l9.500 8 9.500-8" fill="none" stroke="#fff" stroke-width="1.500"/></svg></div>
 <div class="tb d-flex align-items-center justify-content-center"><svg width="30" height="30" viewBox="-15 -15 30 30"><circle r="15" fill="#fbc116"/><path d="M-13-7.500A15 15 0 0 1 13-7.500H0L-5 4z" fill="#e33b2e"/><path d="M-13-7.500A15 15 0 0 0-1 15L6 3H-5z" fill="#24a148"/><circle r="7.200" fill="#fff"/><circle r="5.600" fill="#3b7ded"/></svg></div>
 <div class="tb open d-flex align-items-center justify-content-center"><svg width="30" height="30"><use href="#teams" width="26" height="28"/><path d="M8 21h8v7H8z" fill="#2adbd8"/><circle cx="20" cy="20" r="9.500" fill="#d0281c"/><text x="20" y="25.500" font-size="15" fill="#fff" text-anchor="middle">2</text></svg></div>
 <div class="tb d-flex align-items-center justify-content-center"><svg width="30" height="30"><circle cx="15" cy="15" r="15" fill="#0b5cff"/><text x="15" y="18" font-size="9" font-weight="700" fill="#fff" text-anchor="middle" textLength="21">zoom</text></svg></div>
 <div class="tb open d-flex align-items-center justify-content-center"><svg width="26" height="28"><path d="M13 1q5 3 11 2v13q0 8-11 11Q2 24 2 16V3q6 1 11-2z" fill="#1571c2" stroke="#fff" stroke-width="2"/><g fill="none" stroke="#fff" stroke-width="1.600"><rect x="7" y="8" width="12" height="10" rx="1"/><path d="M7 13h12M11 8v5M15 8v5M13 13v5"/></g></svg></div>
 <div class="tb open d-flex align-items-center justify-content-center"><svg width="30" height="27"><use href="#onenote"/></svg></div>
 <div class="tb open d-flex align-items-center justify-content-center"><svg width="31" height="30"><use href="#vscode"/></svg></div>
 <div class="tb open d-flex align-items-center justify-content-center"><svg width="28" height="28"><path d="M8 2l17 2-3 21-19-4z" fill="#8fc7d0"/><path d="M9 1l16 2-1 4L8 5z" fill="#dfe8e8"/><path d="M4 21l18 4 4-19 1 1-3 20z" fill="#e9eef0"/><path d="M12 8l10 1-2 12-10-2z" fill="#b8e0e3" opacity=".6"/></svg></div>
 <div class="tray ms-auto d-flex align-items-center" style="width:534px">
  <svg width="32" height="32"><circle cx="16" cy="17" r="12" fill="#f58a1c"/><path d="M4 14q-4 0-3.500-4T5 6q2-6 7-3 4-1 4 4 4 1 2 6z" fill="#c3d8f5"/><path d="M16 28q-4-1-2-5 2-2 4-1 3-5 7-1 6 0 5 5 0 2-3 2z" fill="#d9e7fb"/><circle cx="23" cy="8" r="7.500" fill="#d0281c"/><text x="23" y="12.500" font-size="12" fill="#fff" text-anchor="middle">1</text></svg>
  <span style="font-size:17.500px;letter-spacing:-.55px;margin-left:9px;width:48px">31°C</span><span style="font-size:17.500px;letter-spacing:-.3px;width:147px;white-space:nowrap">Sebagian cerah</span>
  <svg width="150" height="26" viewBox="1622 1042 150 26" fill="none" stroke="#fff" stroke-width="1.400"><path d="M1627 1059l8-8 8 8"/><rect x="1660.500" y="1044" width="8" height="15" rx="3.500" fill="#fff"/><path d="M1664.500 1061v4M1660 1065.500h9M1690 1050h14v11h-15v-6M1686 1049v3h4v-3M1688 1052v6M1705 1053v5"/><path d="M1692 1052h10v7h-10z" fill="#fff"/><path d="M1717 1064q0-14 15-16M1721 1064q0-10 11-11.500M1725 1064q0-6 7-7" stroke="#ccc" stroke-width="1.200"/><circle cx="1730" cy="1062" r="2" fill="#fff" stroke="none"/><path d="M1745 1052h3l5-4v14l-5-4h-3zM1756 1051l7 8M1763 1051l-7 8" stroke-width="1.100"/></svg>
  <div class="text-center" style="width:78px;line-height:22.500px;font-size:14.800px;letter-spacing:-.3px;white-space:nowrap">3:21 PM<br>1/11/2024</div>
  <svg width="40" height="40" style="margin-left:15px" viewBox="1866 1035 40 40"><path d="M1869 1045h20v17h-14l-5 4v-4h-1z" fill="#fff"/><path d="M1872 1050h14M1872 1054h14M1872 1058h8" stroke="#444"/><circle cx="1888" cy="1064" r="11" fill="#3c3c3c" stroke="#999" stroke-width="1.200"/><text x="1888" y="1069" font-size="13" font-weight="600" fill="#fff" text-anchor="middle">13</text></svg>
  <div style="width:1px;height:50px;background:#888;margin-left:9px"></div>
 </div>
</footer>

<script>
// Seats on the floor plan: x, y, chair angle, small flag
const NS = 'http://www.w3.org/2000/svg';
function el(parent, tag, attrs, text) {
  const n = document.createElementNS(NS, tag);
  for (const k in attrs) n.setAttribute(k, attrs[k]);
  if (text !== undefined) n.textContent = text;
  parent.appendChild(n);
  return n;
}
function seats(id, list) {
  const g = document.getElementById(id);
  list.forEach(([x, y, a, s]) => {
    el(g, 'use', {href: '#chair', transform: `translate(${x} ${y}) rotate(${a})`});
    el(g, 'circle', {cx: x, cy: y, r: s ? 19 : 25, fill: s ? '#12b50c' : '#04c45c'});
  });
}
seats('seats', [[662,210,90],[603,262,0,1],[730,265,180],[664,318,270],[943,196,90],[877,262,0],[1003,255,180],[943,316,270],
 [838,528,0],[838,603,0],[838,669,0],[842,740,0],[960,528,180],[960,599,180],[960,669,180],[958,740,180],
 [656,865,180],[659,982,180],[706,1054,90],[809,1052,90],[911,1052,90],[1017,1055,90],[1116,1052,90]]);
seats('seats2', [[1575,723,0],[1572,796,0,1],[1573,867,0],[1572,943,0,1],[1575,1014,0],[1698,728,180,1],[1691,796,180],[1691,867,180],[1685,941,180],[1693,1007,180,1]]);

// Career charts: box = [x, y, w, h, fill, text, size, colour]
const Y = '#ffe699', B = '#b4c7e7', N = '#2f5597', G = '#c5e0b4', O = '#f8cbad', R = '#d0cece', K = '#767171', W = '#fff';
function chart(id, boxes, texts) {
  const s = document.getElementById(id);
  s.setAttribute('font-family', 'Lato, sans-serif');
  el(s, 'rect', {x: 0, y: 0, width: 1000, height: 1200, fill: '#fff'});
  boxes.forEach(([x, y, w, h, f, t, z, c]) => {
    el(s, 'rect', {x, y, width: w, height: h, fill: f, stroke: f === W ? '#5b7bb5' : '#6a7485', 'stroke-width': 1.5});
    if (!t) return;
    const lines = t.split('|'), fs = z || 8;
    lines.forEach((l, i) => el(s, 'text', {x: x + w / 2, y: y + h / 2 + fs * .36 + (i - (lines.length - 1) / 2) * fs * 1.1,
      'font-size': fs, 'font-weight': 700, 'text-anchor': 'middle', fill: c || '#1b1b1b'}, l));
  });
  texts.forEach(([x, y, z, w, len, t, c]) => el(s, 'text', {x, y, 'font-size': z, 'font-weight': w, textLength: len, fill: c || '#1b1b1b'}, t));
}
chart('chart1', [
 [60,30,900,37,'#1f3864'],
 [92,138,55,40,'#111','Job Family|Grade',9,W],[148,138,164,40,'#ffd966','Digital Consulting',18],[325,140,205,38,B,'Software Engineering',18],[542,140,154,38,G,'Data Management',18],[703,140,113,38,O,'Cloud|Infrastructure',17],[823,140,108,38,R,'Network &|IT Security',17],
 [92,183,54,27,B,'X',11],[92,214,54,27,B,'IX',11],[92,246,54,29,K,'VIII',11],[92,276,54,30,K,'VII',11],[92,307,54,29,K,'VI',11],
 [325,212,373,30,W],[706,212,225,30,W],
 [148,182,80,24,Y,'Management|Digital Consultant',8,'#c00'],[232,182,77,24,N,'Division|Head',11,W],[148,214,80,24,Y,'Senior Digital|Consultant',8,'#c00'],[232,214,77,24,N,'Unit Head',13,W],
 [490,182,83,23,'#f4a27c','Chief Technical|Officer',8,'#c00'],[591,182,77,23,N,'Division|Head',11,W],[346,214,80,24,B,'Software Architect',8,'#c00'],[430,214,77,24,N,'Unit Head',13,W],[548,215,68,23,G,'Data Scientist',8,'#c00'],[620,214,74,24,N,'Unit Head',13,W],[711,215,44,25,O,'Cloud|Architect',8,'#c00'],[774,215,59,24,N,'Unit|Head',10,W],[838,215,72,25,O,'Cloud Security|Architect',8,'#c00'],
 [148,246,164,90,'#59595f'],[325,246,205,90,K],[541,246,155,90,'#59595f'],[706,246,110,90,'#59595f'],[823,246,108,90,'#59595f'],
 [150,250,50,25,Y,'Digital|Consultant'],[203,250,52,25,Y,'Senior Web|Consultant'],[258,250,50,25,Y,'Senior|Account'],[150,280,50,24,Y,'Business|Analyst 2'],[203,280,52,24,Y,'Web|Consultant'],[258,280,50,24,Y,'Account|Manager'],[150,310,160,22,Y,'Business Analyst 1'],
 [327,249,50,26,B,'Senior|Software|Engineer'],[427,249,50,26,B,'Senior|UI/UX|Engineer'],[327,280,50,25,B,'Software|Engineer 2'],[378,280,48,25,B,'Senior QA|Engineer'],[427,280,48,25,B,'UI/UX|Engineer 2'],[477,280,50,25,B,'System|Analyst'],[327,310,50,24,B,'Software|Engineer 1'],[378,310,48,24,B,'QA|Engineer'],[427,310,48,24,B,'UI/UX|Engineer 1'],
 ...[0,1,2].flatMap(i => [0,1,2].map(j => [544+i*50,249+j*31,48,26,G,['Senior|','Data|','Data|'][j]+['Data Analyst','Engineer 2','Engineer 1'][j]])),
 [711,249,101,26,O,'Senior Cloud Engineer'],[711,281,101,25,O,'Cloud Engineer 2'],[711,311,101,22,O,'Cloud Engineer 1'],
 [825,250,104,27,R,'Senior Network & Security|Engineer'],[825,281,51,25,R,'Security|Engineer 2'],[878,281,51,25,R,'Network|Engineer 2'],[825,310,51,24,R,'Security|Engineer 1'],[878,310,51,24,R,'Network|Engineer 1'],
 [704,342,42,14,W,'Red',9,'#c00'],[803,342,51,15,N,'White',10,W],
 [317,398,430,26,'#4472c4'],[317,426,430,20,'#d5daeb'],[317,446,430,22,'#e9ecf5'],[317,468,430,18,'#cfd5ea'],[317,486,430,24,'#e9ecf5'],[317,510,430,14,'#cfd5ea']
],[
 [65,56,20,700,142,'2. Career Path',W],[90,86,15,700,170,'2.1 Core Function Group'],[90,109,15,400,790,"Based on BSI's value chain, there are 5 Job family defined as Core Function which is directly to deliver services to customers. These"],[90,127,15,400,617,'definition can be adjusted based on business necessity including additional Job position in each grade.'],
 [315,388,16,700,416,'2.1.2 Suggested Moving (80%-100 similarities comp & skills)'],[752,353,10,400,42,'Specialist'],[858,353,10,400,52,'Managerial'],
 [364,412,10,700,50,'Job Family',W],[482,412,10,700,28,'Notes',W],[578,412,10,700,50,'Job Family',W],[698,412,10,700,28,'Notes',W],
 [340,439,9,700,26,'From'],[418,439,9,700,11,'To'],[556,439,9,700,26,'From'],[635,439,9,700,11,'To'],
 [323,460,8,400,54,'Digital Consulting'],[396,456,8,400,35,'Software'],[396,464,8,400,35,'Engineering'],[467,460,8,400,50,'Before grade VII'],[540,456,8,400,22,'Cloud'],[540,464,8,400,42,'Infrastructure'],[611,456,8,400,40,'Network & IT'],[611,464,8,400,25,'Security'],[683,460,8,400,50,'Before grade VII'],
 [323,480,8,400,54,'Digital Consulting'],[396,480,8,400,56,'Data Management'],[467,480,8,400,50,'Before grade VII'],[323,495,8,400,28,'Software'],[323,504,8,400,38,'Engineering'],[396,501,8,400,56,'Data Management'],[467,501,8,400,50,'Before grade VII'],[382,458,10,700,11,'➡','#4472c4'],[382,479,10,700,11,'➡','#4472c4'],[382,501,10,700,11,'➡','#4472c4'],[599,461,10,700,11,'➡','#4472c4']
]);
chart('chart2', [
 [88,716,55,41,'#111','Job Family|Grade',9,W],[147,716,163,41,Y,'Human Capital',17],[318,716,68,41,B,'Legal',17],[399,716,168,41,G,'General Affairs',17],[573,716,146,41,O,'Corporate',17],[727,716,205,40,R,'Finance & Accounting',17],
 [88,759,55,28,B,'X',11],[88,790,55,28,B,'IX',11],[88,822,55,31,K,'VIII',11],[88,854,55,30,K,'VII',11],[88,885,55,31,K,'VI',11],
 [147,761,420,25,N,'Division Head',11,W],[573,761,358,24,N,'Division Head',11,W],[147,793,162,24,N,'Unit Head',11,W],[323,793,242,24,N,'Unit Head',11,W],[573,793,146,24,N,'Unit Head',11,W],[729,790,202,26,N,'Unit Head',11,W],
 [147,822,163,95,'#59595f'],[399,822,168,95,K],[573,822,146,95,K],[727,822,205,95,'#59595f'],
 [152,826,154,26,Y,'Human Capital Professional'],[152,858,48,24,Y,'Senior|Partner'],[202,858,48,24,Y,'Talent|Partner'],[252,858,54,24,Y,'Business|Partner'],[152,889,154,24,Y,'Human Capital Associate'],
 [325,824,60,28,B,'Legal|Professional'],[325,858,60,26,B,'Legal Senior|Associate'],[325,888,60,24,B,'Legal|Associate'],
 [402,857,49,26,G,'Procurement|Senior'],[402,888,49,26,G,'Procurement|Associate'],[453,888,50,26,G,'GA|Associate'],[505,888,52,26,G,'Travel Mgmt|Associate'],
 [576,826,68,27,O,'Professional|Internal Control'],[576,858,70,26,O,'Senior Internal|Control'],[649,858,66,26,O,'Senior Corp.|Plan Associate'],[576,888,70,26,O,'Internal Control|Associate'],[649,888,66,26,O,'Corp. Plan|Associate'],
 [730,825,200,27,R,'Finance Accounting Professional'],[730,858,95,25,R,'Senior Finance & Budget|Associate'],[828,858,102,25,R,'Senior Accounting & Tax|Associate'],[730,888,47,25,R,'Finance|Associate'],[779,888,47,25,R,'Budget|Associate'],[828,888,50,25,R,'Accounting|Associate'],[881,888,49,25,R,'Tax|Associate'],
 [304,966,440,26,'#4472c4']
],[
 [87,660,16,700,225,'2.2 Supporting Functions Group'],[87,683,15,400,856,"Based on BSI's value chain, there are 5 Job family defined as Supporting Functions which is to support Core Functions. These definition can"],[87,702,15,400,542,'be adjusted based on business necessity including additional Job position in each grade.'],
 [303,956,16,700,436,'2.2.2 Suggested Moving (80%-100% similarities comp & skills)'],[352,980,10,700,50,'Job Family',W],[473,980,10,700,28,'Notes',W],[572,980,10,700,50,'Job Family',W],[693,980,10,700,28,'Notes',W]
]);
</script>
</body>
</html>
